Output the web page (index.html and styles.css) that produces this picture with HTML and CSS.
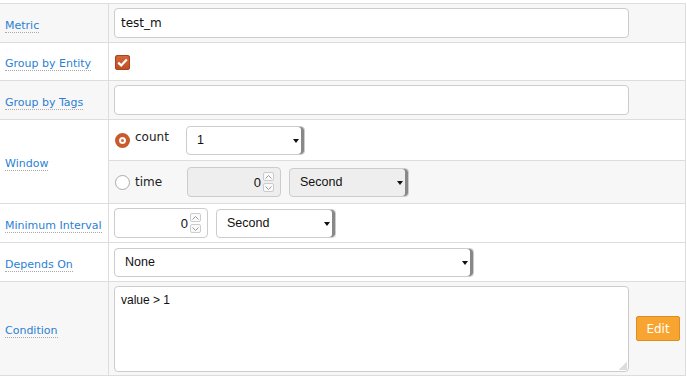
FILE: index.html
```html
<html>
<head>
  <meta charset="utf-8">
  <title>Rule editor</title>
  <link rel="stylesheet" href="styles.css">
</head>
<body>
  <div class="form-table">
    <div class="row shaded r39">
      <div class="label"><a>Metric</a></div>
      <div class="cell"><div class="text-input wide">test_m</div></div>
    </div>
    <div class="row r38">
      <div class="label"><a>Group by Entity</a></div>
      <div class="cell">
        <span class="checkbox">
          <svg width="11" height="9" viewBox="0 0 11 9"><path d="M1.2 4.6 L4.2 7.4 L9.8 1.4" fill="none" stroke="#fff" stroke-width="2.2"/></svg>
        </span>
      </div>
    </div>
    <div class="row shaded r39">
      <div class="label"><a>Group by Tags</a></div>
      <div class="cell"><div class="text-input wide"></div></div>
    </div>
    <div class="row">
      <div class="label"><a>Window</a></div>
      <div class="cell nested">
        <div class="sub sub-count">
          <span class="radio checked"></span><span class="opt">count</span>
          <div class="select w119">1</div>
        </div>
        <div class="sub sub-time shaded">
          <span class="radio"></span><span class="opt">time</span>
          <div class="number disabled w94">
            <span class="num">0</span>
            <span class="spin">
              <span class="spin-btn"><svg width="7" height="4" viewBox="0 0 7 4"><path d="M0.5 3.5 L3.5 0.5 L6.5 3.5" fill="none" stroke="#999" stroke-width="1"/></svg></span>
              <span class="spin-btn"><svg width="7" height="4" viewBox="0 0 7 4"><path d="M0.5 0.5 L3.5 3.5 L6.5 0.5" fill="none" stroke="#999" stroke-width="1"/></svg></span>
            </span>
          </div>
          <div class="select disabled w120 after-num">Second</div>
        </div>
      </div>
    </div>
    <div class="row r39">
      <div class="label"><a>Minimum Interval</a></div>
      <div class="cell inline">
        <div class="number w94">
          <span class="num">0</span>
          <span class="spin">
            <span class="spin-btn"><svg width="7" height="4" viewBox="0 0 7 4"><path d="M0.5 3.5 L3.5 0.5 L6.5 3.5" fill="none" stroke="#999" stroke-width="1"/></svg></span>
            <span class="spin-btn"><svg width="7" height="4" viewBox="0 0 7 4"><path d="M0.5 0.5 L3.5 3.5 L6.5 0.5" fill="none" stroke="#999" stroke-width="1"/></svg></span>
          </span>
        </div>
        <div class="select w120">Second</div>
      </div>
    </div>
    <div class="row r39">
      <div class="label"><a>Depends On</a></div>
      <div class="cell"><div class="select w360">None</div></div>
    </div>
    <div class="row shaded last">
      <div class="label"><a>Condition</a></div>
      <div class="cell inline cond">
        <div class="textarea">value &gt; 1<span class="grip"></span></div>
        <button class="edit-btn">Edit</button>
      </div>
    </div>
  </div>
</body>
</html>
```

FILE: styles.css
```css
body {
  margin: 0;
  background: #fff;
  font-family: "DejaVu Sans", sans-serif;
  color: #222;
}

.form-table {
  margin-top: 3px;
  width: 685px;
  border-right: 1px solid #ddd;
}

.row {
  display: grid;
  grid-template-columns: 109px 1fr;
  border-top: 1px solid #ddd;
}
.row.last {
  border-bottom: 1px solid #ddd;
  height: 93px;
}
.r39 { height: 38px; }
.r38 { height: 37px; }

.shaded { background: #f7f7f7; }

.label {
  display: flex;
  align-items: center;
  padding-left: 5px;
  padding-top: 4px;
  border-right: 1px solid #ddd;
  font-size: 11px;
}
.label a {
  color: #2a7fd4;
  border-bottom: 1px dotted #aaa;
  line-height: 13px;
  padding-top: 1px;
}

.cell {
  display: flex;
  align-items: center;
  padding-left: 5px;
}
.cell.inline { gap: 8px; }
.cell.cond { gap: 7px; }

.cell.nested {
  display: block;
  padding-left: 0;
}

.text-input {
  box-sizing: border-box;
  height: 30px;
  border: 1px solid #ccc;
  border-radius: 4px;
  background: #fff;
  padding: 0 6px;
  display: flex;
  align-items: center;
  font-size: 12px;
  color: #111;
}
.text-input.wide { width: 515px; }

.checkbox {
  width: 15px;
  height: 15px;
  margin: 1px 0 0 1px;
  border-radius: 3px;
  background: linear-gradient(#d8693c, #bd4d22);
  box-shadow: inset 0 0 0 1px #a8441e;
  display: flex;
  align-items: center;
  justify-content: center;
}

.sub {
  display: flex;
  align-items: center;
  padding-left: 6px;
}
.sub-count { height: 40px; }
.sub-time {
  height: 42px;
  border-top: 1px solid #ddd;
}

.radio {
  box-sizing: border-box;
  width: 15px;
  height: 15px;
  border-radius: 50%;
  border: 1px solid #aaa;
  background: #fff;
}
.radio.checked {
  border: 4px solid #c95a2c;
  background: #fff;
  box-shadow: inset 0 0 0 2px #fff, inset 0 0 0 4px #d8693c;
}
.opt {
  width: 51px;
  padding-left: 5px;
  font-size: 12px;
  color: #222;
}
.sub-count .opt { margin-top: -6px; }
.sub-time .opt { width: 52px; }
.after-num { margin-left: 8px; }

.select {
  position: relative;
  box-sizing: border-box;
  height: 29px;
  border: 1px solid #ccc;
  border-radius: 4px;
  background: #fff;
  padding-left: 10px;
  display: flex;
  align-items: center;
  font-family: "Liberation Sans", sans-serif;
  font-size: 12.5px;
  color: #111;
  box-shadow: inset -3px 0 0 #888;
}
.select::after {
  content: "";
  position: absolute;
  right: 5px;
  top: 12px;
  border-left: 3px solid transparent;
  border-right: 3px solid transparent;
  border-top: 4px solid #111;
}
.select.disabled { background: #eee; }
.w119 { width: 119px; }
.w120 { width: 120px; }
.w360 { width: 360px; }
.w94 { width: 94px; }

.number {
  box-sizing: border-box;
  height: 30px;
  border: 1px solid #ccc;
  border-radius: 4px;
  background: #fff;
  display: flex;
  align-items: center;
  justify-content: flex-end;
  padding-right: 6px;
  gap: 2px;
}
.number.disabled { background: #eee; }
.num {
  font-family: "Liberation Sans", sans-serif;
  font-size: 13px;
  color: #111;
}
.spin {
  display: flex;
  flex-direction: column;
  gap: 2px;
}
.spin-btn {
  box-sizing: border-box;
  width: 11px;
  height: 9px;
  border: 1px solid #ccc;
  border-radius: 2px;
  background: #fafafa;
  display: flex;
  align-items: center;
  justify-content: center;
}

.textarea {
  position: relative;
  box-sizing: border-box;
  width: 515px;
  height: 86px;
  border: 1px solid #ccc;
  border-radius: 4px;
  background: #fff;
  padding: 6px 6px;
  font-family: "Liberation Sans", sans-serif;
  font-size: 12px;
  color: #111;
}
.grip {
  position: absolute;
  right: 1px;
  bottom: 1px;
  width: 8px;
  height: 8px;
  background: linear-gradient(135deg, transparent 50%, #ddd 50%);
}

.edit-btn {
  box-sizing: border-box;
  width: 44px;
  height: 25px;
  border: 1px solid #dd8d22;
  border-radius: 2px;
  background: #f8a430;
  color: #fff;
  font-family: "DejaVu Sans", sans-serif;
  font-size: 12px;
  padding: 0;
}
```
